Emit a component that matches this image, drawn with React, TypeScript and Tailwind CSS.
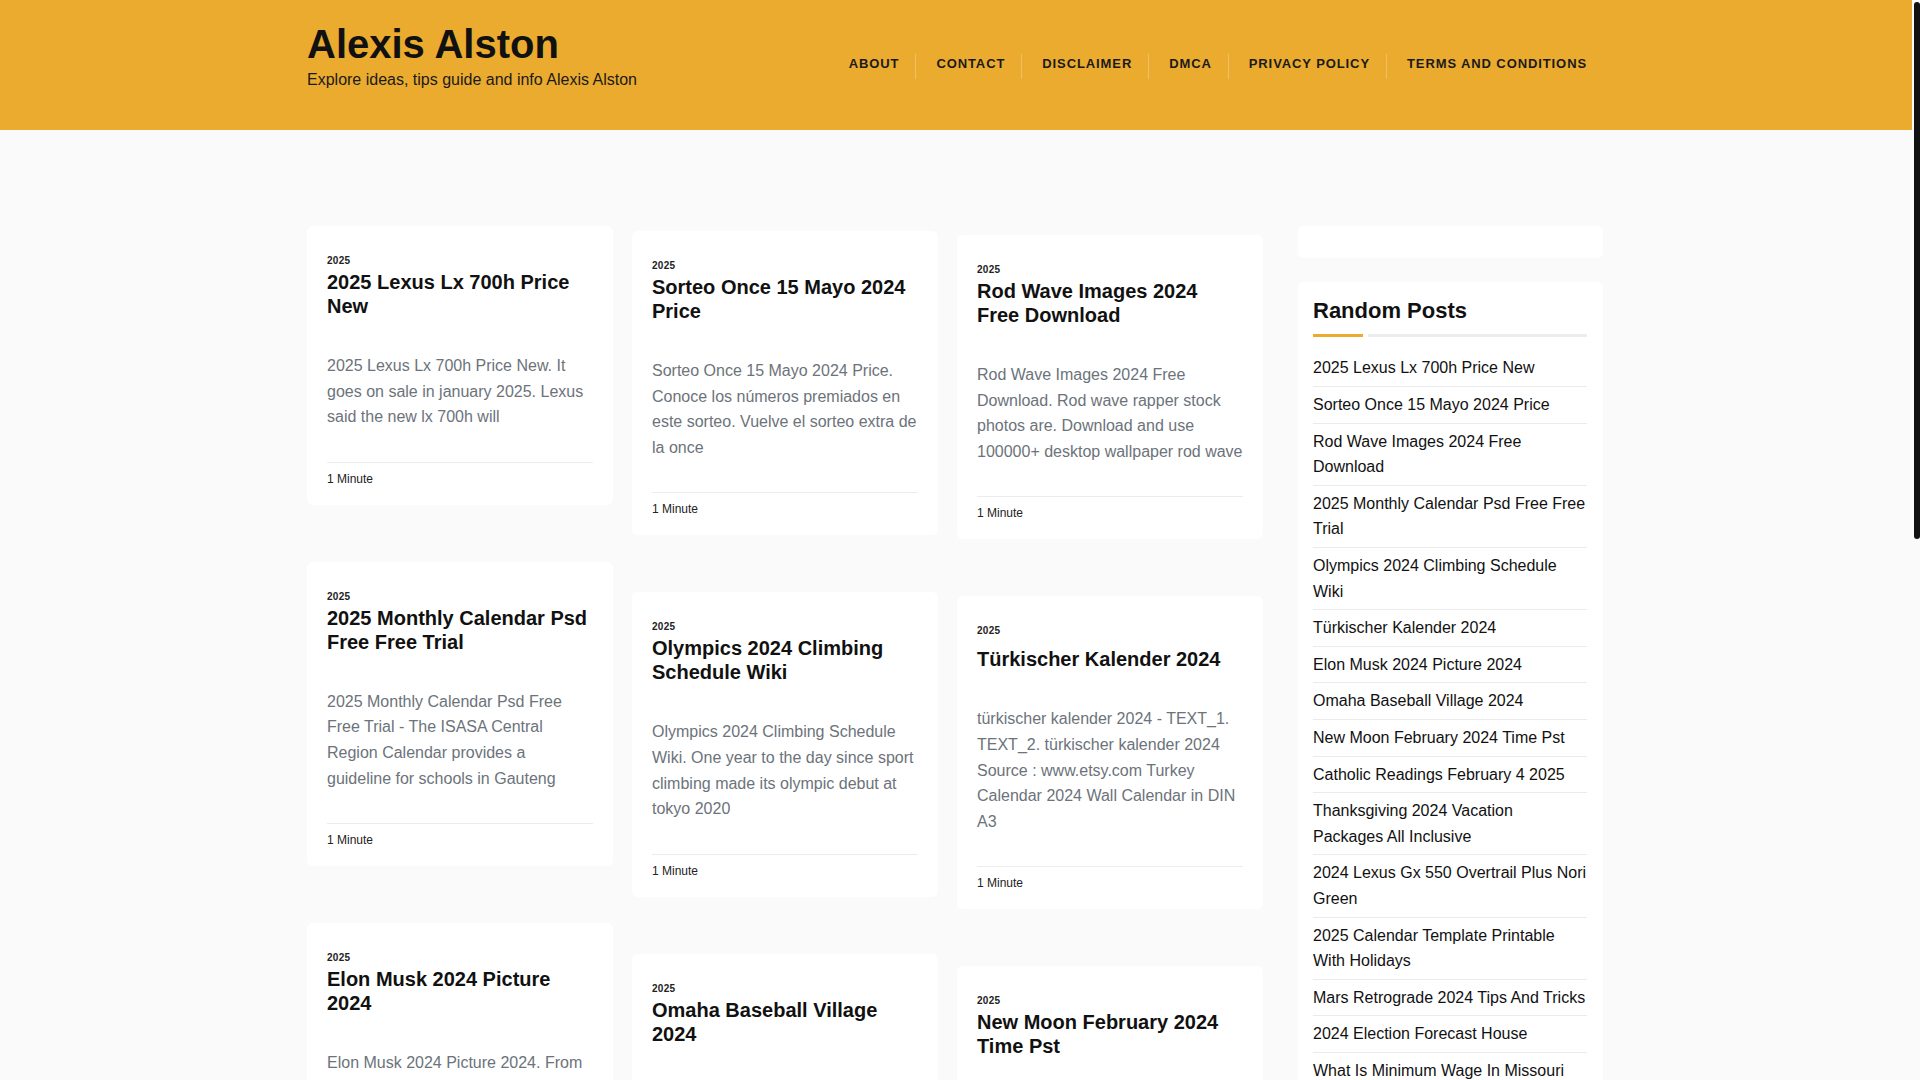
import React from "react";

type Post = { title: string; excerpt: string };

const NAV = ["About", "Contact", "Disclaimer", "DMCA", "Privacy Policy", "Terms and Conditions"];

const COLUMNS: { offset: string; posts: Post[] }[] = [
  {
    offset: "pt-0",
    posts: [
      {
        title: "2025 Lexus Lx 700h Price New",
        excerpt: "2025 Lexus Lx 700h Price New. It goes on sale in january 2025. Lexus said the new lx 700h will",
      },
      {
        title: "2025 Monthly Calendar Psd Free Free Trial",
        excerpt:
          "2025 Monthly Calendar Psd Free Free Trial - The ISASA Central Region Calendar provides a guideline for schools in Gauteng",
      },
      {
        title: "Elon Musk 2024 Picture 2024",
        excerpt: "Elon Musk 2024 Picture 2024. From the tesla ceo to the spacex founder, browse the latest photos",
      },
      {
        title: "Catholic Readings February 4 2025",
        excerpt: "Catholic Readings February 4 2025. Daily mass readings for tuesday of the fourth week",
      },
    ],
  },
  {
    offset: "pt-[5px]",
    posts: [
      {
        title: "Sorteo Once 15 Mayo 2024 Price",
        excerpt:
          "Sorteo Once 15 Mayo 2024 Price. Conoce los números premiados en este sorteo. Vuelve el sorteo extra de la once",
      },
      {
        title: "Olympics 2024 Climbing Schedule Wiki",
        excerpt:
          "Olympics 2024 Climbing Schedule Wiki. One year to the day since sport climbing made its olympic debut at tokyo 2020",
      },
      {
        title: "Omaha Baseball Village 2024",
        excerpt: "Omaha Baseball Village 2024. The college world series fan village opens near charles schwab field",
      },
      {
        title: "Thanksgiving 2024 Vacation Packages All Inclusive",
        excerpt: "Thanksgiving 2024 Vacation Packages All Inclusive. Find the best deals for a family getaway",
      },
    ],
  },
  {
    offset: "pt-[9px]",
    posts: [
      {
        title: "Rod Wave Images 2024 Free Download",
        excerpt:
          "Rod Wave Images 2024 Free Download. Rod wave rapper stock photos are. Download and use 100000+ desktop wallpaper rod wave",
      },
      {
        title: "Türkischer Kalender 2024",
        excerpt:
          "türkischer kalender 2024 - TEXT_1. TEXT_2. türkischer kalender 2024 Source : www.etsy.com Turkey Calendar 2024 Wall Calendar in DIN A3",
      },
      {
        title: "New Moon February 2024 Time Pst",
        excerpt: "New Moon February 2024 Time Pst. The new moon arrives on february 9 at 2:59 pm pacific time",
      },
      {
        title: "2024 Lexus Gx 550 Overtrail Plus Nori Green",
        excerpt: "2024 Lexus Gx 550 Overtrail Plus Nori Green. The new gx arrives with a twin turbo v6",
      },
    ],
  },
];

const RANDOM = [
  "2025 Lexus Lx 700h Price New",
  "Sorteo Once 15 Mayo 2024 Price",
  "Rod Wave Images 2024 Free Download",
  "2025 Monthly Calendar Psd Free Free Trial",
  "Olympics 2024 Climbing Schedule Wiki",
  "Türkischer Kalender 2024",
  "Elon Musk 2024 Picture 2024",
  "Omaha Baseball Village 2024",
  "New Moon February 2024 Time Pst",
  "Catholic Readings February 4 2025",
  "Thanksgiving 2024 Vacation Packages All Inclusive",
  "2024 Lexus Gx 550 Overtrail Plus Nori Green",
  "2025 Calendar Template Printable With Holidays",
  "Mars Retrograde 2024 Tips And Tricks",
  "2024 Election Forecast House",
  "What Is Minimum Wage In Missouri 2025",
  "Printable Calendar 2025 Free",
  "Nfl Draft 2024 Order Of Picks",
];

const PostCard = ({ post }: { post: Post }) => (
  <article className="rounded-md bg-white px-5 pt-[27px] pb-[17px]">
    <a href="#" className="block text-[10px] leading-[15px] font-bold tracking-[0.3px] text-[#222]">
      2025
    </a>
    <div className="mt-[2px] flex min-h-[31px] flex-col justify-end">
      <h2 className="text-[20px] leading-6 font-bold text-[#111]">
        <a href="#">{post.title}</a>
      </h2>
    </div>
    <p className="mt-[35px] text-base leading-[1.6] text-[#6c737a]">{post.excerpt}</p>
    <div className="mt-8 border-t border-[#ececec] pt-[7px] text-xs leading-[18px] text-[#222]">1 Minute</div>
  </article>
);

export default function App() {
  return (
    <div className="min-h-screen bg-[#fafafa] pr-2 font-['Liberation_Sans',Arial,sans-serif]">
      <header className="h-[130px] bg-[#ebab2e]">
        <div className="mx-auto flex max-w-[1320px] justify-between pr-[13px] pl-[11px]">
          <div className="pt-5">
            <h1 className="text-[40px] leading-[48px] font-bold text-[#111]">
              <a href="#">Alexis Alston</a>
            </h1>
            <p className="text-base leading-6 text-[#1a1a1a]">Explore ideas, tips guide and info Alexis Alston</p>
          </div>
          <nav className="flex items-start pt-[54px]">
            {NAV.map((item, i) => (
              <a
                key={item}
                href="#"
                className={
                  "h-[25px] pr-4 pl-5 text-[13px] leading-5 font-bold tracking-[0.9px] text-[#1a1a1a] uppercase " +
                  (i > 0 ? "border-l border-white/25" : "")
                }
              >
                {item}
              </a>
            ))}
          </nav>
        </div>
      </header>

      <main className="mx-auto flex max-w-[1320px] items-start gap-[35px] pt-24 pr-[13px] pb-16 pl-[11px]">
        <div className="flex w-[956px] shrink-0 items-start gap-[19px]">
          {COLUMNS.map((col, i) => (
            <div key={i} className={"flex w-[306px] flex-col gap-[57px] " + col.offset}>
              {col.posts.map((p) => (
                <PostCard key={p.title} post={p} />
              ))}
            </div>
          ))}
        </div>

        <aside className="flex w-[305px] shrink-0 flex-col gap-6">
          <div className="h-8 rounded-md bg-white" />
          <div className="rounded-md bg-white pt-4 pr-4 pb-4 pl-[15px]">
            <h3 className="text-[22px] leading-[26.4px] font-bold text-[#111]">Random Posts</h3>
            <div className="mt-[10px] flex items-center gap-[5px]">
              <span className="h-[3px] w-[50px] bg-[#ebab2e]" />
              <span className="h-[3px] flex-1 bg-[#ededed]" />
            </div>
            <ul className="mt-[13px]">
              {RANDOM.map((t) => (
                <li key={t} className="border-b border-[#ebebeb] py-[5px] text-base leading-[1.6] text-[#111]">
                  <a href="#">{t}</a>
                </li>
              ))}
            </ul>
          </div>
        </aside>
      </main>

      <footer className="bg-[#ebab2e] px-3 py-10 text-center text-sm text-[#1a1a1a]">
        Copyright © 2025 Alexis Alston
      </footer>

      {/* page scrollbar, as seen in the screenshot */}
      <div className="fixed top-0 right-0 h-screen w-2 bg-[#fafafa]">
        <div className="mt-[2px] ml-[2px] h-[537px] w-[6px] rounded-full bg-[#111]" />
      </div>
    </div>
  );
}
